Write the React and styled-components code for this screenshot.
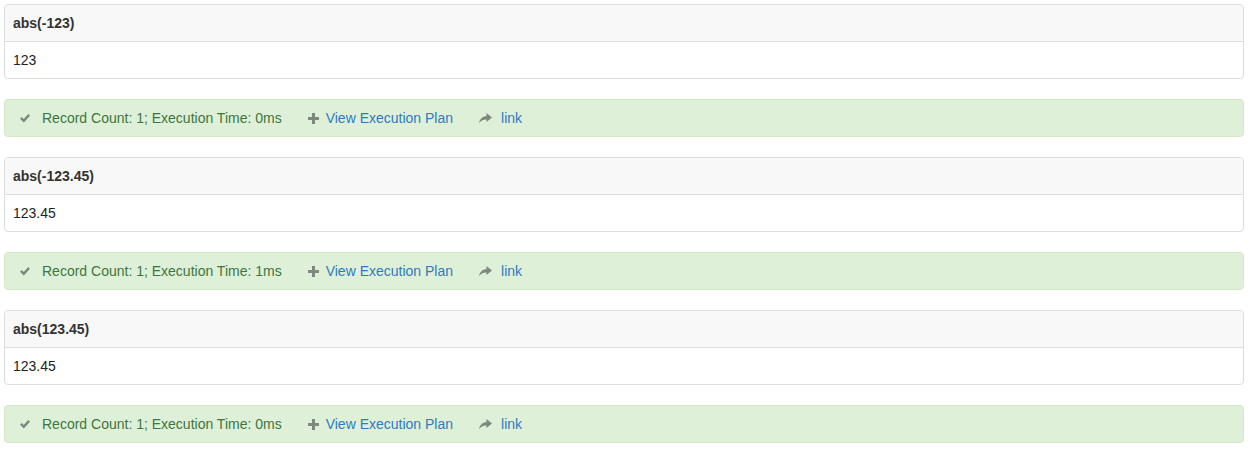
import styled, { createGlobalStyle } from 'styled-components';

const GlobalStyle = createGlobalStyle`
  body {
    margin: 0;
    background: #fff;
    font-family: "Liberation Sans", Arial, Helvetica, sans-serif;
    font-size: 14px;
    line-height: 20px;
    color: #333;
  }
`;

const Page = styled.div`
  padding: 4px 7px 4px 4px;
  display: flex;
  flex-direction: column;
  gap: 20px;
`;

const Panel = styled.div`
  border: 1px solid #ddd;
  border-radius: 4px;
  background: #fff;
  overflow: hidden;
`;

const PanelHeading = styled.div`
  padding: 8px 8px;
  background: #f8f8f8;
  border-bottom: 1px solid #ddd;
  font-weight: bold;
  color: #333;
`;

const PanelBody = styled.div`
  padding: 8px 8px;
  color: #222;
`;

const Alert = styled.div`
  display: flex;
  align-items: center;
  padding: 8px 15px;
  background: #dff0d8;
  border: 1px solid #d6e9c6;
  border-radius: 4px;
  color: #3c763d;
`;

const Item = styled.span`
  display: inline-flex;
  align-items: center;
  margin-left: ${(p) => (p.$first ? 0 : 26)}px;
  gap: ${(p) => p.$gap}px;
`;

const Link = styled.a`
  color: #2f7bc0;
  text-decoration: none;
  cursor: pointer;
`;

const Icon = styled.svg`
  display: block;
  fill: #7e887e;
  flex-shrink: 0;
`;

const OkIcon = () => (
  <Icon width="10" height="9" viewBox="0 0 10 9">
    <path d="M0 4.8 L1.8 3.1 L3.8 5.1 L8.2 0 L10 1.7 L3.8 8.6 Z" />
  </Icon>
);

const PlusIcon = () => (
  <Icon width="11" height="11" viewBox="0 0 11 11">
    <path d="M4 0 H7 V4 H11 V7 H7 V11 H4 V7 H0 V4 H4 Z" />
  </Icon>
);

const ShareIcon = () => (
  <Icon width="13" height="10" viewBox="0 0 13 10">
    <path d="M7.5 0 L13 4.6 L7.5 9 V6.4 C4.6 6.3 2.2 7.3 0 10 C0.8 6 3.4 3.1 7.5 2.9 Z" />
  </Icon>
);

const results = [
  { expr: 'abs(-123)', value: '123', time: '0ms' },
  { expr: 'abs(-123.45)', value: '123.45', time: '1ms' },
  { expr: 'abs(123.45)', value: '123.45', time: '0ms' },
];

function Result({ expr, value, time }) {
  return (
    <>
      <Panel>
        <PanelHeading>{expr}</PanelHeading>
        <PanelBody>{value}</PanelBody>
      </Panel>
      <Alert>
        <Item $first $gap={12}>
          <OkIcon />
          Record Count: 1; Execution Time: {time}
        </Item>
        <Item $gap={7}>
          <PlusIcon />
          <Link>View Execution Plan</Link>
        </Item>
        <Item $gap={9}>
          <ShareIcon />
          <Link>link</Link>
        </Item>
      </Alert>
    </>
  );
}

export default function App() {
  return (
    <>
      <GlobalStyle />
      <Page>
        {results.map((r) => (
          <Result key={r.expr} {...r} />
        ))}
      </Page>
    </>
  );
}
